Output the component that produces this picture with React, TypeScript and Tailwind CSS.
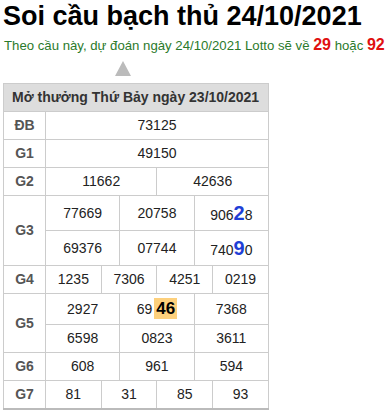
import type { ReactNode } from "react";

const LABEL_CLS =
  "border border-[#cccccc] text-center font-bold text-[14px] text-[#555555] p-0";
const CELL_CLS = "border border-[#cccccc] text-center text-[14px] text-[#222222] p-0";

function Cell({ span, children }: { span: number; children: ReactNode }) {
  return (
    <td colSpan={span} className={CELL_CLS}>
      {children}
    </td>
  );
}

function Blue({ children }: { children: ReactNode }) {
  return <span className="text-[20px] font-bold text-[#1f3fd6]">{children}</span>;
}

export default function App() {
  return (
    <div className="w-[391px] h-[412px] overflow-hidden bg-white font-['Liberation_Sans',Arial,sans-serif]">
      <h1 className="pl-[3px] text-[27px] leading-[32px] font-bold text-black">
        Soi cầu bạch thủ 24/10/2021
      </h1>
      <p className="mt-[3px] pl-[4px] text-[13.2px] leading-[20px] text-[#2b7a2b] whitespace-nowrap">
        Theo cầu này, dự đoán ngày 24/10/2021 Lotto sẽ về{" "}
        <span className="text-[16px] font-bold text-[#e01010]">29</span> hoặc{" "}
        <span className="text-[16px] font-bold text-[#e01010]">92</span>
      </p>

      {/* pointer */}
      <div className="pl-[115px] pt-[5px]">
        <svg width="16" height="15" viewBox="0 0 16 15" className="block">
          <polygon points="8,0 16,15 0,15" fill="#bbbbbb" />
        </svg>
      </div>

      <table className="ml-[3px] mt-[7px] w-[266px] table-fixed border-collapse border-b-2 border-b-[#bbbbbb]">
        <colgroup>
          <col className="w-[42px]" />
          {Array.from({ length: 12 }).map((_, i) => (
            <col key={i} />
          ))}
        </colgroup>
        <tbody>
          <tr className="h-[28px]">
            <td
              colSpan={13}
              className="border border-[#cccccc] bg-[#dddddd] pl-[8px] text-left text-[14px] font-bold text-[#333333]"
            >
              Mở thưởng Thứ Bảy ngày 23/10/2021
            </td>
          </tr>
          <tr className="h-[28px]">
            <td className={LABEL_CLS}>ĐB</td>
            <Cell span={12}>73125</Cell>
          </tr>
          <tr className="h-[28px]">
            <td className={LABEL_CLS}>G1</td>
            <Cell span={12}>49150</Cell>
          </tr>
          <tr className="h-[28px]">
            <td className={LABEL_CLS}>G2</td>
            <Cell span={6}>11662</Cell>
            <Cell span={6}>42636</Cell>
          </tr>
          <tr className="h-[35px]">
            <td rowSpan={2} className={LABEL_CLS}>
              G3
            </td>
            <Cell span={4}>77669</Cell>
            <Cell span={4}>20758</Cell>
            <Cell span={4}>
              906<Blue>2</Blue>8
            </Cell>
          </tr>
          <tr className="h-[35px]">
            <Cell span={4}>69376</Cell>
            <Cell span={4}>07744</Cell>
            <Cell span={4}>
              740<Blue>9</Blue>0
            </Cell>
          </tr>
          <tr className="h-[28px]">
            <td className={LABEL_CLS}>G4</td>
            <Cell span={3}>1235</Cell>
            <Cell span={3}>7306</Cell>
            <Cell span={3}>4251</Cell>
            <Cell span={3}>0219</Cell>
          </tr>
          <tr className="h-[31px]">
            <td rowSpan={2} className={LABEL_CLS}>
              G5
            </td>
            <Cell span={4}>2927</Cell>
            <Cell span={4}>
              69
              <span className="ml-[2px] bg-[#fdd07c] px-[2px] py-[1px] text-[17px] font-bold text-black">
                46
              </span>
            </Cell>
            <Cell span={4}>7368</Cell>
          </tr>
          <tr className="h-[28px]">
            <Cell span={4}>6598</Cell>
            <Cell span={4}>0823</Cell>
            <Cell span={4}>3611</Cell>
          </tr>
          <tr className="h-[28px]">
            <td className={LABEL_CLS}>G6</td>
            <Cell span={4}>608</Cell>
            <Cell span={4}>961</Cell>
            <Cell span={4}>594</Cell>
          </tr>
          <tr className="h-[28px]">
            <td className={LABEL_CLS}>G7</td>
            <Cell span={3}>81</Cell>
            <Cell span={3}>31</Cell>
            <Cell span={3}>85</Cell>
            <Cell span={3}>93</Cell>
          </tr>
        </tbody>
      </table>
    </div>
  );
}
